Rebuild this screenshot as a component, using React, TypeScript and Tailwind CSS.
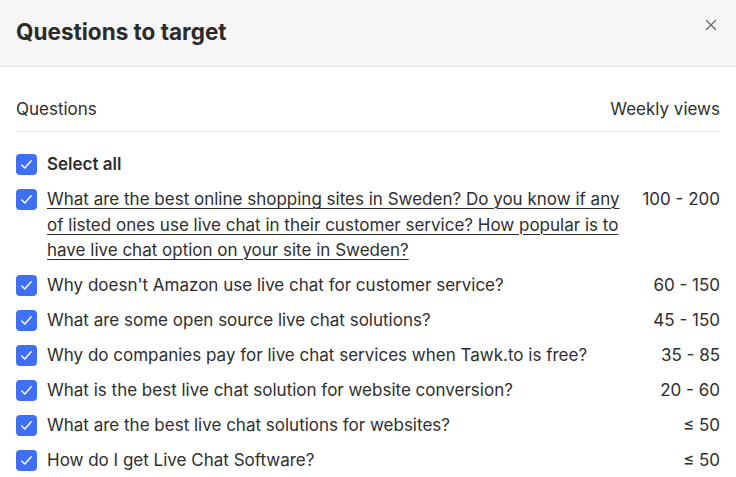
import { X } from "lucide-react";

type Question = { text: string; views: string; link?: boolean };

const questions: Question[] = [
  {
    text: "What are the best online shopping sites in Sweden? Do you know if any of listed ones use live chat in their customer service? How popular is to have live chat option on your site in Sweden?",
    views: "100 - 200",
    link: true,
  },
  { text: "Why doesn't Amazon use live chat for customer service?", views: "60 - 150" },
  { text: "What are some open source live chat solutions?", views: "45 - 150" },
  { text: "Why do companies pay for live chat services when Tawk.to is free?", views: "35 - 85" },
  { text: "What is the best live chat solution for website conversion?", views: "20 - 60" },
  { text: "What are the best live chat solutions for websites?", views: "≤ 50" },
  { text: "How do I get Live Chat Software?", views: "≤ 50" },
];

function Check() {
  return (
    <span className="mt-[2px] flex h-[21px] w-[21px] shrink-0 items-center justify-center rounded-[4px] bg-[#3f6ff5]">
      <svg width="15" height="15" viewBox="0 0 16 16" fill="none">
        <path d="M3 8.5l3.2 3.3L13 4" stroke="white" strokeWidth="1.5" strokeLinecap="round" strokeLinejoin="round" />
      </svg>
    </span>
  );
}

export default function App() {
  return (
    <div className="h-[477px] w-[736px] overflow-hidden bg-white text-[#2e2e2e]" style={{ fontFamily: "Inter, 'Liberation Sans', Arial, sans-serif" }}>
      <div className="flex h-[67px] items-center justify-between border-b border-[#dedede] bg-[#f6f6f6] pl-4 pr-4">
        <h1 className="-mt-[2px] text-[22.5px] font-bold text-[#2b2b2b]">Questions to target</h1>
        <X className="-mt-4 text-[#666]" size={18} strokeWidth={1.6} />
      </div>

      <div className="px-4 pt-[30px]">
        <div className="flex items-center justify-between border-b border-[#e0e0e0] pb-[10px] text-[17px] leading-[24px]">
          <span>Questions</span>
          <span>Weekly views</span>
        </div>

        <div className="flex flex-col gap-[9.5px] pt-[20px] text-[17px] leading-[25.5px]">
          <label className="flex items-start gap-[10px]">
            <Check />
            <span className="font-semibold">Select all</span>
          </label>
          {questions.map((q) => (
            <label key={q.text} className="flex items-start gap-[10px]">
              <Check />
              <span className={"flex-1 " + (q.link ? "underline decoration-1 underline-offset-[3px]" : "")}>
                {q.text}
              </span>
              <span className="shrink-0 whitespace-nowrap text-right">{q.views}</span>
            </label>
          ))}
        </div>
      </div>
    </div>
  );
}
